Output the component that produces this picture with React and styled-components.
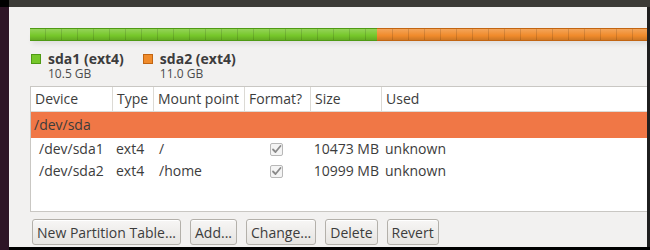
import React from 'react';
import styled, { createGlobalStyle } from 'styled-components';

const GlobalStyle = createGlobalStyle`
  html, body {
    margin: 0;
    padding: 0;
    background: #2c0f22;
  }
  body {
    font-family: "Open Sans", "DejaVu Sans", sans-serif;
    color: #3c3c3c;
  }
`;

const partitions = [
  { id: 'sda1', name: 'sda1 (ext4)', size: '10.5 GB', color: '#76c72a', dark: '#4f9a14', share: 347 },
  { id: 'sda2', name: 'sda2 (ext4)', size: '11.0 GB', color: '#f08b2b', dark: '#c26512', share: 273 }
];

const columns = [
  { key: 'device', label: 'Device', width: 82 },
  { key: 'type', label: 'Type', width: 41 },
  { key: 'mount', label: 'Mount point', width: 91 },
  { key: 'format', label: 'Format?', width: 66 },
  { key: 'size', label: 'Size', width: 71 },
  { key: 'used', label: 'Used', width: 269 }
];

const rows = [
  { device: '/dev/sda1', type: 'ext4', mount: '/', size: '10473 MB', used: 'unknown' },
  { device: '/dev/sda2', type: 'ext4', mount: '/home', size: '10999 MB', used: 'unknown' }
];

const buttons = ['New Partition Table...', 'Add...', 'Change...', 'Delete', 'Revert'];

const Screen = styled.div`
  width: 650px;
  height: 250px;
  display: flex;
  flex-direction: column;
  overflow: hidden;
  background: #000;
`;

const TopBar = styled.div`
  height: 7px;
  background: #3c3b37;
  margin-left: 9px;
  flex-shrink: 0;
`;

const Body = styled.div`
  display: flex;
  flex: 1;
  min-height: 0;
`;

const LeftEdge = styled.div`
  width: 9px;
  background: #2e1526;
  flex-shrink: 0;
`;

const Window = styled.div`
  flex: 1;
  background: #f2f1f0;
  padding: 21px 0 0 21px;
  display: flex;
  flex-direction: column;
  overflow: hidden;
  border-right: 3px solid #1f1f1f;
  margin-bottom: 3px;
`;

const BarTrack = styled.div`
  display: flex;
  height: 13px;
  width: 640px;
  flex-shrink: 0;
  box-shadow: 0 5px 5px -2px rgba(0, 0, 0, 0.08);
`;

const BarPart = styled.div`
  width: ${p => p.$w}px;
  background-color: ${p => p.$color};
  background-image:
    repeating-linear-gradient(90deg, transparent 0 15px, rgba(0,0,0,0.13) 15px 16px),
    linear-gradient(180deg, rgba(255,255,255,0.22), rgba(255,255,255,0) 60%, rgba(0,0,0,0.15));
  border-top: 1px solid ${p => p.$dark};
  border-bottom: 1px solid ${p => p.$dark};
`;

const Legend = styled.div`
  display: flex;
  gap: 19px;
  margin-top: 9px;
  margin-left: 1px;
  flex-shrink: 0;
`;

const LegendItem = styled.div`
  display: grid;
  grid-template-columns: 10px auto;
  column-gap: 7px;
`;

const Swatch = styled.span`
  width: 8px;
  height: 8px;
  margin-top: 4px;
  background: ${p => p.$color};
  border: 1px solid ${p => p.$dark};
`;

const LegendName = styled.span`
  font-weight: 700;
  font-size: 14px;
  line-height: 17px;
  color: #3c3c3c;
`;

const LegendSize = styled.span`
  grid-column: 2;
  font-size: 12px;
  line-height: 14px;
  color: #4c4c4c;
`;

const Table = styled.div`
  margin-top: 5px;
  background: #fff;
  border: 1px solid #c9c7c3;
  border-right: none;
  height: 124px;
  width: 640px;
  flex-shrink: 0;
  display: flex;
  flex-direction: column;
`;

const HeaderRow = styled.div`
  display: flex;
  height: 24px;
  border-bottom: 1px solid #dcdad5;
`;

const HeaderCell = styled.div`
  width: ${p => p.$w}px;
  flex-shrink: 0;
  box-sizing: border-box;
  padding-left: 4px;
  font-size: 14px;
  line-height: 24px;
  color: #3c3c3c;
  white-space: nowrap;
  overflow: hidden;
  border-right: ${p => (p.$last ? 'none' : '1px solid #dcdad5')};
`;

const DiskRow = styled.div`
  height: 26px;
  background: #f07746;
  color: #3c3c3c;
  font-size: 14px;
  line-height: 26px;
  padding-left: 3px;
`;

const Row = styled.div`
  display: flex;
  height: 22px;
  font-size: 14px;
  line-height: 22px;
  color: #3c3c3c;
`;

const Cell = styled.div`
  width: ${p => p.$w}px;
  flex-shrink: 0;
  box-sizing: border-box;
  padding-left: ${p => p.$pad ?? 3}px;
  padding-right: ${p => p.$padRight ?? 0}px;
  display: flex;
  align-items: center;
  justify-content: ${p => (p.$align === 'right' ? 'flex-end' : 'flex-start')};
  white-space: nowrap;
`;

const Check = styled.svg`
  width: 13px;
  height: 13px;
  margin-left: 22px;
`;

const Checkbox = () => (
  <Check viewBox="0 0 13 13">
    <rect x="0.5" y="0.5" width="12" height="12" rx="1.5" fill="#f4f4f4" stroke="#b8b8b8" />
    <path d="M3 6.5 L5.5 9 L10.5 3" fill="none" stroke="#8a8a8a" strokeWidth="1.8" strokeLinecap="round" strokeLinejoin="round" />
  </Check>
);

const ButtonBar = styled.div`
  display: flex;
  gap: 9px;
  margin-top: 7px;
  margin-left: 2px;
  flex-shrink: 0;
`;

const Button = styled.button`
  height: 26px;
  padding: 0 4px;
  font-family: "Open Sans", "DejaVu Sans", sans-serif;
  font-size: 14px;
  color: #3c3c3c;
  background: linear-gradient(180deg, #f7f6f5, #e6e4e1);
  border: 1px solid #b3b0aa;
  border-radius: 3px;
  box-shadow: inset 0 1px 0 #fff;
  white-space: nowrap;
  cursor: default;
`;

export default function App() {
  return (
    <>
      <GlobalStyle />
      <Screen>
        <TopBar />
        <Body>
          <LeftEdge />
          <Window>
            <BarTrack>
              {partitions.map(p => (
                <BarPart key={p.id} $w={p.share} $color={p.color} $dark={p.dark} />
              ))}
            </BarTrack>
            <Legend>
              {partitions.map(p => (
                <LegendItem key={p.id}>
                  <Swatch $color={p.color} $dark={p.dark} />
                  <LegendName>{p.name}</LegendName>
                  <LegendSize>{p.size}</LegendSize>
                </LegendItem>
              ))}
            </Legend>
            <Table>
              <HeaderRow>
                {columns.map((c, i) => (
                  <HeaderCell key={c.key} $w={c.width} $last={i === columns.length - 1}>
                    {c.label}
                  </HeaderCell>
                ))}
              </HeaderRow>
              <DiskRow>/dev/sda</DiskRow>
              {rows.map(r => (
                <Row key={r.device}>
                  <Cell $w={columns[0].width} $pad={8}>{r.device}</Cell>
                  <Cell $w={columns[1].width}>{r.type}</Cell>
                  <Cell $w={columns[2].width} $pad={5}>{r.mount}</Cell>
                  <Cell $w={columns[3].width}><Checkbox /></Cell>
                  <Cell $w={columns[4].width} $pad={0} $align="right" $padRight={3}>{r.size}</Cell>
                  <Cell $w={columns[5].width} $pad={3}>{r.used}</Cell>
                </Row>
              ))}
            </Table>
            <ButtonBar>
              {buttons.map(b => (
                <Button key={b}>{b}</Button>
              ))}
            </ButtonBar>
          </Window>
        </Body>
      </Screen>
    </>
  );
}
